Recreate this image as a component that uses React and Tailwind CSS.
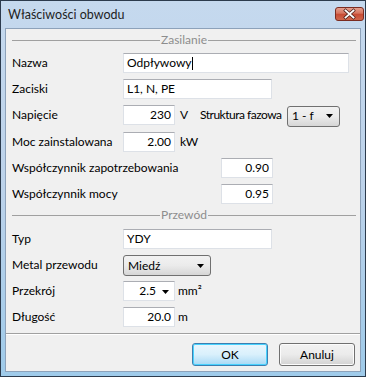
import React from 'react';

const font = { fontFamily: 'Lato, "Liberation Sans", sans-serif' };

const Arrow = () => (
  <svg width="7" height="4" viewBox="0 0 7 4">
    <path d="M0 0h7L3.5 4z" fill="#000" />
  </svg>
);

const Field = ({ className = '', align = 'left', children }) => (
  <div
    className={`h-[20px] bg-white border border-[#dde1e7] border-t-[#abadb3] flex items-center text-black ${
      align === 'right' ? 'justify-end pr-[3px]' : 'pl-[3px]'
    } ${className}`}
  >
    {children}
  </div>
);

const Dropdown = ({ className = '', children }) => (
  <div
    className={`h-[21px] shrink-0 rounded-[3px] border border-[#707070] bg-gradient-to-b from-[#f2f2f2] via-[#ebebeb] to-[#d6d6d6] flex items-center pl-[4px] pr-[6px] ${className}`}
  >
    <span className="flex-1">{children}</span>
    <Arrow />
  </div>
);

const Section = ({ title, className = '' }) => (
  <div className={`h-[14px] flex items-center pl-[6px] pr-[4px] ${className}`}>
    <div className="flex-1 h-px bg-[#a0a0a0]" />
    <span className="px-[1px] text-[#8d8d8d] leading-none">{title}</span>
    <div className="flex-1 h-px bg-[#a0a0a0]" />
  </div>
);

const Row = ({ label, wide, className = '', children }) => (
  <div className={`h-[20px] flex items-center pl-[6px] whitespace-nowrap ${className}`}>
    <span className={wide ? 'w-[209px]' : 'w-[111px]'}>{label}</span>
    {children}
  </div>
);

const CloseButton = () => (
  <svg width="29" height="14" viewBox="0 0 29 14">
    <defs>
      <linearGradient id="cb" x1="0" y1="0" x2="0" y2="1">
        <stop offset="0" stopColor="#e6a494" />
        <stop offset="0.45" stopColor="#d6735d" />
        <stop offset="0.5" stopColor="#c74a33" />
        <stop offset="1" stopColor="#d0694e" />
      </linearGradient>
    </defs>
    <rect x="0.5" y="0.5" width="28" height="13" rx="2.5" fill="url(#cb)" stroke="#7a2c21" />
    <path d="M10.5 3.5l8 7M18.5 3.5l-8 7" stroke="#4a1e18" strokeWidth="3.2" strokeLinecap="square" />
    <path d="M10.5 3.5l8 7M18.5 3.5l-8 7" stroke="#fff" strokeWidth="1.8" strokeLinecap="square" />
  </svg>
);

export default function App() {
  return (
    <div
      style={font}
      className="w-[366px] h-[377px] border border-[#2c3b4d] bg-gradient-to-b from-[#c5d9ee] via-[#bcd2ea] to-[#9fcbea] flex flex-col px-[4px] pb-[4px] text-[12px] text-black"
    >
      <div className="h-[27px] flex items-center pl-[3px]">
        <span className="flex-1 text-[12.5px] text-[#1e1e1e] pt-[1px]">Właściwości obwodu</span>
        <div className="mr-[-3px] mb-[2px]">
          <CloseButton />
        </div>
      </div>
      <div className="flex-1 border border-[#8da2ba] bg-[#f0f0f0] flex flex-col">
        <Section title="Zasilanie" className="mt-[4px]" />
        <Row label="Nazwa" className="mt-[6px]">
          <Field className="w-[226px]">
            Odpływowy<span className="w-px h-[13px] bg-black" />
          </Field>
        </Row>
        <Row label="Zaciski" className="mt-[6px]">
          <Field className="w-[149px]">L1, N, PE</Field>
        </Row>
        <Row label="Napięcie" className="mt-[6px]">
          <Field className="w-[52px]" align="right">230</Field>
          <span className="ml-[5px] w-[20px]">V</span>
          <span className="w-[87px] tracking-[-0.5px]">Struktura fazowa</span>
          <Dropdown className="w-[53px] mt-[2px]">1 - f</Dropdown>
        </Row>
        <Row label="Moc zainstalowana" className="mt-[7px]">
          <Field className="w-[52px]" align="right">2.00</Field>
          <span className="ml-[5px]">kW</span>
        </Row>
        <Row label="Współczynnik zapotrzebowania" wide className="mt-[6px]">
          <Field className="w-[52px]" align="right">0.90</Field>
        </Row>
        <Row label="Współczynnik mocy" wide className="mt-[6px]">
          <Field className="w-[52px]" align="right">0.95</Field>
        </Row>
        <Section title="Przewód" className="mt-[4px]" />
        <Row label="Typ" className="mt-[7px]">
          <Field className="w-[149px]">YDY</Field>
        </Row>
        <Row label="Metal przewodu" className="mt-[6px]">
          <Dropdown className="w-[88px] mt-[1px]">Miedź</Dropdown>
        </Row>
        <Row label="Przekrój" className="mt-[6px]">
          <div className="w-[52px] h-[20px] bg-white border border-[#dde1e7] border-t-[#abadb3] flex items-center">
            <span className="flex-1 text-right">2.5</span>
            <span className="w-[18px] flex justify-center pt-[1px]">
              <Arrow />
            </span>
          </div>
          <span className="ml-[3px]">mm²</span>
        </Row>
        <Row label="Długość" className="mt-[6px]">
          <Field className="w-[52px]" align="right">20.0</Field>
          <span className="ml-[3px]">m</span>
        </Row>
        <div className="mt-[6px] h-px bg-[#a0a0a0] border-b border-white box-content" />
        <div className="mt-[8px] flex justify-end gap-[11px] pr-[5px]">
          <button className="w-[76px] h-[23px] rounded-[3px] border border-[#3c7fb1] bg-gradient-to-b from-[#eaf6fd] via-[#d9f0fc] to-[#a7d9f5] shadow-[inset_0_0_0_1px_#48d2fe]">
            OK
          </button>
          <button className="w-[76px] h-[23px] rounded-[3px] border border-[#707070] bg-gradient-to-b from-[#f2f2f2] via-[#ebebeb] to-[#d2d2d2] shadow-[inset_0_0_0_1px_#fcfcfc]">
            Anuluj
          </button>
        </div>
      </div>
    </div>
  );
}
